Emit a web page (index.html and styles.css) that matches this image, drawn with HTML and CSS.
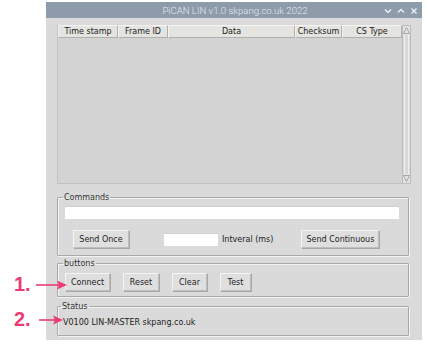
FILE: index.html
```html
<!DOCTYPE html>
<html lang="en">
<head>
    <meta charset="UTF-8">
    <title>PiCAN LIN</title>
    <link rel="stylesheet" href="styles.css">
</head>
<body>

<div class="window">
    <div class="titlebar">
        <span class="title">PiCAN LIN v1.0 skpang.co.uk 2022</span>
        <div class="controls">
            <svg width="8" height="6" viewBox="0 0 8 6"><path d="M1 1.5 L4 4.5 L7 1.5" fill="none" stroke="#eef1f4" stroke-width="1.4"/></svg>
            <svg width="8" height="6" viewBox="0 0 8 6"><path d="M1 4.5 L4 1.5 L7 4.5" fill="none" stroke="#eef1f4" stroke-width="1.4"/></svg>
            <svg width="8" height="8" viewBox="0 0 8 8"><path d="M1.5 1.5 L6.5 6.5 M6.5 1.5 L1.5 6.5" fill="none" stroke="#eef1f4" stroke-width="1.4"/></svg>
        </div>
    </div>

    <div class="content">
        <div class="listbox">
            <div class="table">
                <div class="table-head">
                    <div class="col col-time">Time stamp</div>
                    <div class="col col-frame">Frame ID</div>
                    <div class="col col-data">Data</div>
                    <div class="col col-check">Checksum</div>
                    <div class="col col-type">CS Type</div>
                </div>
            </div>
            <div class="scrollbar">
                <div class="arrow up">
                    <svg width="7" height="7" viewBox="0 0 7 7"><path d="M0.5 6.5 L3.5 0.5 L6.5 6.5 Z" fill="none" stroke="#9a9a9a" stroke-width="0.8"/></svg>
                </div>
                <div class="trough"></div>
                <div class="arrow down">
                    <svg width="7" height="7" viewBox="0 0 7 7"><path d="M0.5 0.5 L3.5 6.5 L6.5 0.5 Z" fill="none" stroke="#9a9a9a" stroke-width="0.8"/></svg>
                </div>
            </div>
        </div>

        <fieldset class="frame commands">
            <legend>Commands</legend>
            <div class="entry wide"></div>
            <div class="cmd-row">
                <button class="btn btn-once">Send Once</button>
                <div class="interval">
                    <div class="entry small"></div>
                    <span>Intveral (ms)</span>
                </div>
                <button class="btn btn-cont">Send Continuous</button>
            </div>
        </fieldset>

        <fieldset class="frame buttons">
            <legend>buttons</legend>
            <div class="btn-row">
                <button class="btn">Connect</button>
                <button class="btn">Reset</button>
                <button class="btn">Clear</button>
                <button class="btn">Test</button>
            </div>
        </fieldset>

        <fieldset class="frame status">
            <legend>Status</legend>
            <div class="status-text">V0100 LIN-MASTER skpang.co.uk</div>
        </fieldset>
    </div>
</div>

<!-- annotation arrows -->
<div class="note note-1">
    <span>1.</span>
    <svg width="31" height="12" viewBox="0 0 31 12"><path d="M0 6 H23" stroke="#ec3a73" stroke-width="1.6"/><path d="M21 1.5 L31 6 L21 10.5 L23 6 Z" fill="#ec3a73"/></svg>
</div>
<div class="note note-2">
    <span>2.</span>
    <svg width="24" height="12" viewBox="0 0 24 12"><path d="M0 6 H16" stroke="#ec3a73" stroke-width="1.6"/><path d="M14 1.5 L24 6 L14 10.5 L16 6 Z" fill="#ec3a73"/></svg>
</div>

</body>
</html>
```

FILE: styles.css
```css
body {
    margin: 0;
    padding: 0;
    background-color: #fff;
    font-family: 'DejaVu Sans', sans-serif;
    font-size: 8px;
    color: #222;
}

.window {
    width: 376px;
    height: 338px;
    margin: 2px 0 0 46px;
    background-color: #dadada;
}

.titlebar {
    height: 16px;
    background-color: #8d9bab;
    display: flex;
    align-items: center;
    justify-content: center;
    position: relative;
}

.title {
    font-family: Roboto, sans-serif;
    font-weight: 300;
    font-size: 9.6px;
    color: #e4e9ef;
    margin-left: 2px;
}

.controls {
    position: absolute;
    right: 4px;
    top: 5px;
    display: flex;
    gap: 5px;
    align-items: center;
}

.content {
    padding: 7px 12px 0 11px;
}

/* list area */
.listbox {
    display: flex;
    height: 159px;
}

.table {
    flex: 1;
    background-color: #d3d3d3;
    border-left: 1px solid #c2c2c2;
    border-bottom: 1px solid #c2c2c2;
}

.table-head {
    display: flex;
    height: 13px;
    background-color: #e4e4e0;
}

.col {
    display: flex;
    align-items: center;
    justify-content: center;
    border: 1px solid #b0b0ac;
    border-left-color: #f4f4f2;
    border-top-color: #f4f4f2;
    box-sizing: border-box;
    height: 13px;
}

.col-time { width: 60px; }
.col-frame { width: 50px; }
.col-data { width: 127px; }
.col-check { width: 47px; }
.col-type { width: 60px; }

.scrollbar {
    width: 9px;
    display: flex;
    flex-direction: column;
    background-color: #d8d8d8;
    border: 1px solid #bdbdbd;
    box-sizing: border-box;
}

.arrow {
    height: 9px;
    display: flex;
    align-items: center;
    justify-content: center;
    background-color: #e2e2e2;
}

.trough {
    flex: 1;
    border-left: 1px solid #f0f0f0;
    border-right: 1px solid #f0f0f0;
    margin: 0 1px;
}

/* frames */
.frame {
    margin: 0;
    border: 1px solid #a9a9a9;
    border-radius: 1px;
    box-shadow: inset 1px 1px 0 #f2f2f2, 1px 1px 0 #f2f2f2;
    padding: 0;
    width: 352px;
    box-sizing: border-box;
}

.frame legend {
    padding: 0 1px;
    margin-left: -2px;
    font-size: 8px;
    line-height: 9px;
    color: #333;
}

.commands {
    margin-top: 9px;
    height: 63px;
    padding: 4px 9px 0 7px;
}

.entry {
    background-color: #fff;
    border-top: 1px solid #cfcfcf;
}

.entry.wide {
    height: 12px;
}

.cmd-row {
    display: flex;
    align-items: center;
    margin-top: 11px;
}

.btn {
    font-family: 'DejaVu Sans', sans-serif;
    font-size: 8px;
    color: #222;
    background-color: #dfdfdf;
    border: 1px solid #bdbdbd;
    border-top-color: #f4f4f4;
    border-left-color: #f4f4f4;
    box-shadow: 1px 1px 0 #a8a8a8;
    height: 18px;
    padding: 0;
    margin: 0;
}

.btn-once {
    width: 56px;
    margin-left: 8px;
}

.interval {
    display: flex;
    align-items: center;
    gap: 4px;
    margin-left: 35px;
}

.entry.small {
    width: 54px;
    height: 12px;
}

.btn-cont {
    width: 78px;
    margin-left: 28px;
}

.buttons {
    margin-top: 3px;
    height: 38px;
    padding: 5px 0 0 7px;
}

.btn-row {
    display: flex;
    gap: 13px;
}

.btn-row .btn:nth-child(1) { width: 45px; }
.btn-row .btn:nth-child(2) { width: 36px; }
.btn-row .btn:nth-child(3) { width: 35px; }
.btn-row .btn:nth-child(4) { width: 31px; }

.status {
    margin-top: 5px;
    height: 34px;
    padding: 7px 0 0 5px;
}

.status-text {
    font-size: 8px;
    color: #222;
}

/* annotations */
.note {
    position: absolute;
    display: flex;
    align-items: center;
    gap: 5px;
    font-family: 'Liberation Sans', sans-serif;
    font-weight: bold;
    font-size: 20px;
    color: #ec3a73;
}

.note-1 {
    left: 14px;
    top: 273px;
}

.note-2 {
    left: 14px;
    top: 308px;
}

.note-2 svg {
    margin-left: 3px;
}
```
